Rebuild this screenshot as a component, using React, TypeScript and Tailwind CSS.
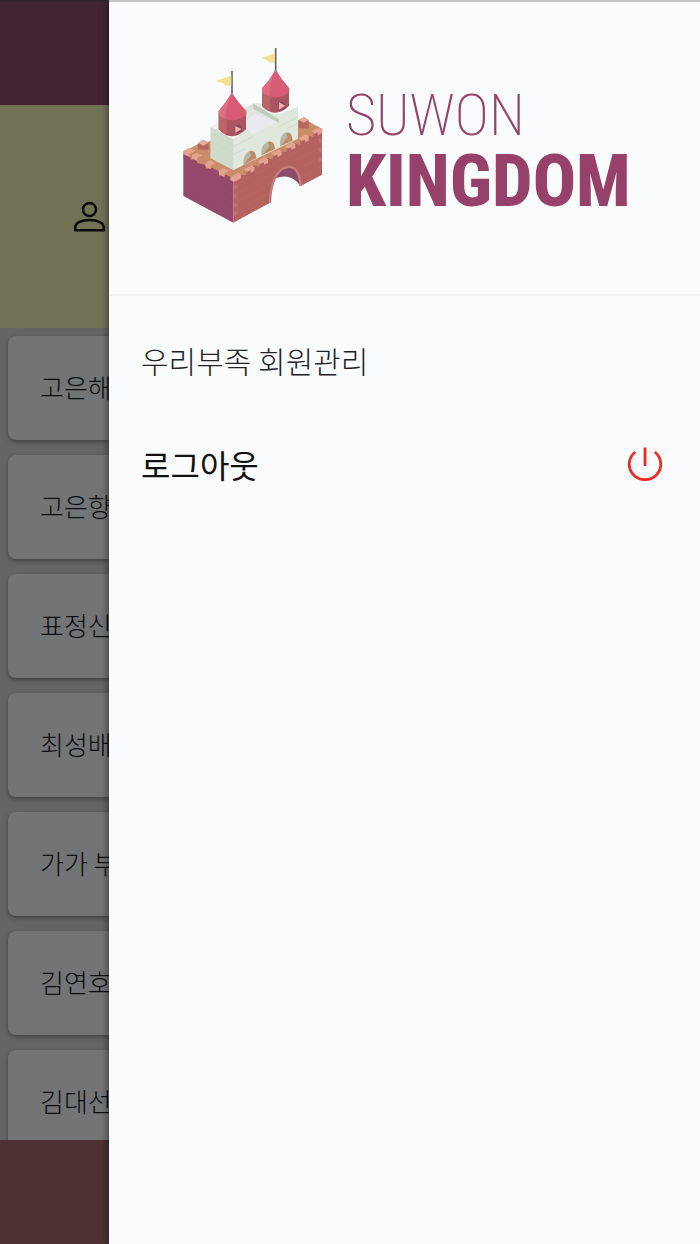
import React from "react";

const members = ["고은해", "고은향", "표정신", "최성배", "가가 부", "김연호", "김대선"];

function PersonIcon() {
  return (
    <svg viewBox="0 0 32 32" className="size-8 shrink-0" fill="none" stroke="#090a09" strokeWidth="2.5" aria-hidden="true">
      <circle cx="16.5" cy="8.5" r="6.5" />
      <path d="M2.2 29.3V26.5C2.2 21.5 9 19 16.5 19S30.8 21.5 30.8 26.5V29.3Z" strokeLinejoin="round" />
    </svg>
  );
}

function PowerIcon() {
  return (
    <svg viewBox="0 0 36 36" className="size-9" fill="none" stroke="#ee2b23" strokeWidth="2.8" aria-hidden="true">
      <path d="M18 1.5V20" />
      <path d="M8.2 6A15.8 15.5 0 1 0 27.8 6" />
    </svg>
  );
}

function Castle() {
  return (
    <svg viewBox="0 0 510 570" className="h-[190px] w-[170px] shrink-0" role="img" aria-label="Suwon Kingdom">
      <path d="M40 336 84 312 400 236 456 266 440 300 190 428 40 356Z" fill="#c98b68" />
      <path d="M84 310 100 300 116 308V330L84 328Z" fill="#b0655f" />
      <path d="M84 310 100 300 116 308 101 317Z" fill="#e8a895" />
      <path d="M386 240 402 232 416 240V266L386 264Z" fill="#b7655f" />
      <path d="M386 240 402 232 416 240 401 248Z" fill="#e8a895" />
      <path d="M40 340 60 350 62 360 80 356 82 370 106 374 108 386 128 384 146 394 148 408 168 405 190 415V548L40 468Z" fill="#94486a" />
      <path d="M190 415 210 405 228 405 230 390 253 376 268 380 270 366 292 354 308 358 310 346 333 333 349 337 351 322 374 310 390 314 392 300 414 288 430 291 432 278 456 266V404L392 438C390 400 374 374 348 382C317 392 302 436 300 488L190 548Z" fill="#b36260" />
      <path d="M392 438C390 400 374 374 348 382C333 387 322 399 315 416C350 401 373 414 392 438Z" fill="#8d4a6a" />
      <path d="M300 488C302 430 319 390 348 382C375 374 390 400 392 438" fill="none" stroke="#c67f7c" strokeWidth="7" />
      <g fill="#e3a390">
        <path d="M40 333 58 323 76 332 59 342 60 352 40 343Z" />
        <path d="M66 345 80 338 96 346 82 354V364L66 355Z" />
        <path d="M107 368 121 361 137 369 122 377V388L107 380Z" />
        <path d="M147 391 161 384 178 392 164 400V412L147 403Z" />
        <path d="M181 412 207 398 213 404V415L192 426 181 421Z" />
        <path d="M221 388 244 376 253 381V393L242 398V391L231 396Z" />
        <path d="M263 364 285 352 294 357V369L282 374V367L271 372Z" />
        <path d="M304 340 326 329 335 334V346L323 351V343L312 348Z" />
        <path d="M345 318 367 307 376 312V324L364 329V322L353 326Z" />
        <path d="M386 295 407 283 416 288V302L405 306V299L394 303Z" />
        <path d="M425 274 441 264 457 266V279L443 286V277L434 281Z" />
      </g>
      <path d="M40 362 190 440M40 386 190 464M40 410 190 488M40 434 190 512" stroke="#a3527a" strokeWidth="2" opacity=".5" />
      <path d="M190 440 456 292M190 466 318 395M190 492 304 430M190 518 300 458M380 360 456 320M390 385 456 350M394 412 456 378" stroke="#c2736d" strokeWidth="2" opacity=".45" />
      <path d="M190 436h12v12h-12v14h12v12h-12v14h12v12h-12v14h12v12h-12M456 296h-10v12h10v16h-10v12h10v16h-10v12h10" fill="#c87974" opacity=".6" />
      <path d="M122 262 250 190 322 225 384 200V296L190 390 122 354Z" fill="#dfe5dc" />
      <path d="M122 262 190 298V390L122 354Z" fill="#cfdacb" />
      <path d="M190 298 242 270 250 277 326 237 384 203V294L368 302C367 282 358 273 347 279C337 285 332 300 331 319L315 327C314 308 304 300 292 307C281 314 276 329 275 346L259 354C257 335 248 328 237 335C226 342 222 356 221 374L190 390Z" fill="#e0e7dc" />
      <path d="M275 346C276 329 281 314 292 307C304 300 314 308 315 327ZM331 319C332 300 337 285 347 279C358 273 367 282 368 302ZM221 374C222 356 226 342 237 335C248 328 257 335 259 354Z" fill="#bd8b66" />
      <path d="M275 346C272 326 278 313 292 306L299 318ZM331 319C328 300 334 284 347 277L353 291ZM221 374C218 355 226 341 237 334L244 346Z" fill="#b3b9a6" />
      <path d="M122 262 147 247 213 284 190 298Z" fill="#eef1ea" />
      <path d="M213 254 254 222 326 246 248 282Z" fill="#e8eaf0" />
      <path d="M250 190 270 190 340 230 326 240Z" fill="#e4ebe0" />
      <path d="M250 190V207L326 248V237Z" fill="#bfcdbd" />
      <path d="M122 280 190 314M122 302 190 336M122 324 190 358M190 320 248 290M190 344 225 326M326 260 384 231M350 266 384 249" stroke="#c9d4c5" strokeWidth="2" />
      <g>
        <path d="M146 222V268Q184 310 228 268V222Z" fill="#ab5560" />
        <path d="M146 222V268Q157 280 170 284V232Z" fill="#bb6569" />
        <path d="M194 258Q205 248 215 261V276L196 280Z" fill="#87465e" />
        <path d="M196 258 215 267 196 279Z" fill="#efb4a6" />
        <path d="M186 157C198 180 214 195 229 213V224Q189 258 146 224V213C162 194 174 179 186 157Z" fill="#d75c76" />
        <path d="M186 157C174 179 162 194 146 213V224Q154 232 166 237C168 202 178 177 186 157Z" fill="#de6d82" />
        <path d="M186 93V160" stroke="#68656a" strokeWidth="5" />
        <path d="M184 107 160 115 137 123 158 130 166 136 184 137Z" fill="#f3e192" />
      </g>
      <g>
        <path d="M276 152V198Q315 238 357 198V152Z" fill="#ab5560" />
        <path d="M276 152V198Q287 211 301 214V162Z" fill="#bb6569" />
        <path d="M325 190Q334 177 346 190V207L326 211Z" fill="#87465e" />
        <path d="M327 187 346 197 327 209Z" fill="#efb4a6" />
        <path d="M317 88C329 111 343 127 358 145V156Q320 188 276 156V145C293 127 305 111 317 88Z" fill="#d75c76" />
        <path d="M317 88C305 111 293 127 276 145V156Q285 164 298 169C299 133 308 108 317 88Z" fill="#de6d82" />
        <path d="M317 24V92" stroke="#68656a" strokeWidth="5" />
        <path d="M315 39 291 48 275 53 291 61 298 67 315 68Z" fill="#f3e192" />
      </g>
    </svg>
  );
}

export default function App() {
  return (
    <div className="flex h-screen overflow-hidden bg-[#f9fbfd] font-['Noto_Sans_CJK_KR',sans-serif]">
      <main className="flex w-[109px] shrink-0 flex-col overflow-hidden bg-[#646566]">
        <header className="h-[105px] shrink-0 border-t-2 border-[#31252d] bg-[#422532]" />
        <section className="flex h-[223px] shrink-0 items-center justify-end bg-[#727257] pr-1">
          <PersonIcon />
        </section>
        <ul className="flex min-h-0 flex-1 flex-col gap-[15px] overflow-hidden pt-2 pl-2">
          {members.map((name) => (
            <li
              key={name}
              className="flex h-[104px] shrink-0 items-center rounded-l-lg bg-[#737475] pb-1 pl-8 text-[26px] font-light whitespace-nowrap text-[#0c0d0e] shadow-[0_2px_4px_#414243]"
            >
              {name}
            </li>
          ))}
        </ul>
        <footer className="h-[104px] shrink-0 bg-[#4e3133]" />
      </main>
      <aside className="relative flex min-w-0 flex-1 flex-col border-t-2 border-[#c3c5c7] bg-[#f9fbfd] shadow-[0_0_8px_#00000099]">
        <div className="flex h-[294px] shrink-0 items-start border-b-2 border-[#eff1f3] pt-[38px] pl-[61px]">
          <Castle />
          <div className="pt-10 pl-1.5 font-['Roboto_Condensed',Roboto,sans-serif] text-[#96406a]">
            <div className="text-[58px] leading-[70px] font-extralight">SUWON</div>
            <div className="text-[72px] leading-[64px] font-extrabold">KINGDOM</div>
          </div>
        </div>
        <nav className="flex flex-col pt-8 pl-8 text-[#222325]">
          <a href="#members" className="text-[30px] leading-[64px] font-light">
            우리부족 회원관리
          </a>
          <button
            type="button"
            className="mt-9 flex h-[72px] items-center justify-between pr-[37px] text-left text-[32px] leading-9 font-normal text-[#111]"
          >
            로그아웃
            <PowerIcon />
          </button>
        </nav>
      </aside>
    </div>
  );
}
